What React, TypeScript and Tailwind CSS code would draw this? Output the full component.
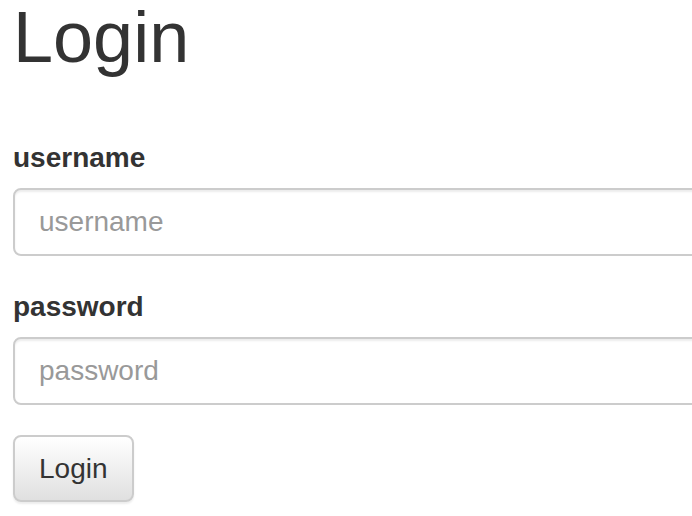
import React from "react";

export default function App() {
  return (
    <div
      className="w-[692px] h-[516px] overflow-hidden bg-white text-[#333]"
      style={{ fontFamily: '"Liberation Sans", Arial, Helvetica, sans-serif' }}
    >
      <div className="pl-[13px] w-[900px]">
        <h1 className="mt-[-2px] text-[72px] leading-[1.1] font-normal m-0">Login</h1>
        <form className="mt-[61px]" onSubmit={(e) => e.preventDefault()}>
          <div className="mb-[31px]">
            <label className="block text-[28px] leading-[40px] font-bold mb-[10px]">username</label>
            <input
              placeholder="username"
              className="block w-[860px] h-[68px] px-[24px] text-[28px] text-[#555] placeholder:text-[#999] border-2 border-[#ccc] rounded-[8px] bg-white shadow-[inset_0_2px_2px_rgba(0,0,0,0.075)] outline-none"
            />
          </div>
          <div className="mb-[30px]">
            <label className="block text-[28px] leading-[40px] font-bold mb-[10px]">password</label>
            <input
              type="password"
              placeholder="password"
              className="block w-[860px] h-[68px] px-[24px] text-[28px] text-[#555] placeholder:text-[#999] border-2 border-[#ccc] rounded-[8px] bg-white shadow-[inset_0_2px_2px_rgba(0,0,0,0.075)] outline-none"
            />
          </div>
          <button
            type="submit"
            className="h-[67px] px-[24px] text-[28px] leading-[40px] text-[#333] border-2 border-[#ccc] rounded-[8px] bg-gradient-to-b from-white to-[#e0e0e0] shadow-[inset_0_2px_0_rgba(255,255,255,0.15),0_2px_2px_rgba(0,0,0,0.075)]"
          >
            Login
          </button>
        </form>
      </div>
    </div>
  );
}
